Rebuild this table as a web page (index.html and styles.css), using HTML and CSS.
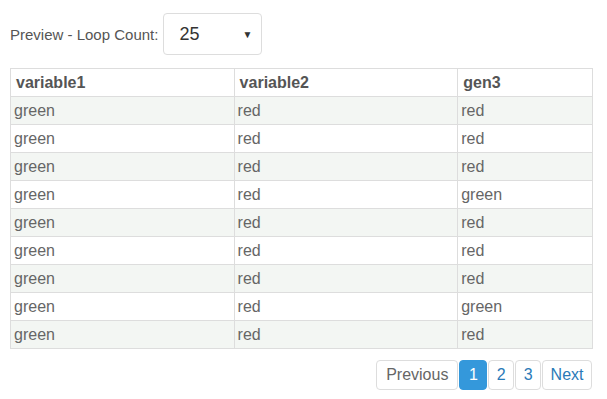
FILE: index.html
```html
<!DOCTYPE html>
<html>
<head>
<meta charset="utf-8">
<link rel="stylesheet" href="styles.css">
</head>
<body>
<div class="page">
  <div class="controls">
    <label class="label">Preview - Loop Count:</label>
    <div class="select">
      <span class="select-value">25</span>
      <span class="caret">&#9660;</span>
    </div>
  </div>
  <table class="grid">
    <colgroup><col class="c1"><col class="c2"><col class="c3"></colgroup>
    <thead>
      <tr><th>variable1</th><th>variable2</th><th>gen3</th></tr>
    </thead>
    <tbody>
      <tr><td>green</td><td>red</td><td>red</td></tr>
      <tr><td>green</td><td>red</td><td>red</td></tr>
      <tr><td>green</td><td>red</td><td>red</td></tr>
      <tr><td>green</td><td>red</td><td>green</td></tr>
      <tr><td>green</td><td>red</td><td>red</td></tr>
      <tr><td>green</td><td>red</td><td>red</td></tr>
      <tr><td>green</td><td>red</td><td>red</td></tr>
      <tr><td>green</td><td>red</td><td>green</td></tr>
      <tr><td>green</td><td>red</td><td>red</td></tr>
    </tbody>
  </table>
  <div class="pager">
    <a class="pg prev">Previous</a>
    <a class="pg active">1</a>
    <a class="pg">2</a>
    <a class="pg">3</a>
    <a class="pg">Next</a>
  </div>
</div>
</body>
</html>
```
FILE: styles.css
```css
html, body {
  margin: 0;
  padding: 0;
  background: #fff;
}
body {
  font-family: "Liberation Sans", Arial, sans-serif;
  color: #555;
}
.page {
  padding: 13px 14px 0 10px;
}
.controls {
  display: flex;
  align-items: center;
  height: 42px;
}
.label {
  font-size: 15px;
  color: #555;
  margin-right: 5px;
}
.select {
  box-sizing: border-box;
  width: 99px;
  height: 42px;
  border: 1px solid #ddd;
  border-radius: 4px;
  display: flex;
  align-items: center;
  justify-content: space-between;
  padding: 0 9px 0 15px;
}
.select-value {
  font-size: 18px;
  color: #333;
}
.caret {
  font-size: 10px;
  color: #333;
}
.grid {
  margin-top: 13px;
  width: 583px;
  border-collapse: collapse;
  font-size: 16px;
}
.c1 { width: 224px; }
.c2 { width: 224px; }
.c3 { width: 135px; }
.grid th, .grid td {
  border: 1px solid #ddd;
  height: 28px;
  padding: 0 3px;
  text-align: left;
  box-sizing: border-box;
}
.grid th {
  font-weight: bold;
  padding-left: 5px;
  color: #555;
}
.grid td {
  color: #666;
}
.grid tbody tr:nth-child(odd) td {
  background: #f3f6f3;
}
.pager {
  display: flex;
  justify-content: flex-end;
  gap: 1px;
  margin-top: 11px;
  padding-right: 1px;
}
.pg {
  box-sizing: border-box;
  height: 30px;
  line-height: 28px;
  border: 1px solid #ddd;
  border-radius: 4px;
  padding: 0 7.5px;
  font-size: 16px;
  color: #2a7ab8;
}
.pg.prev {
  color: #666;
  padding: 0 9px;
}
.pg.active {
  background: #3498db;
  border-color: #3498db;
  color: #fff;
  padding: 0 8.5px;
}
```
